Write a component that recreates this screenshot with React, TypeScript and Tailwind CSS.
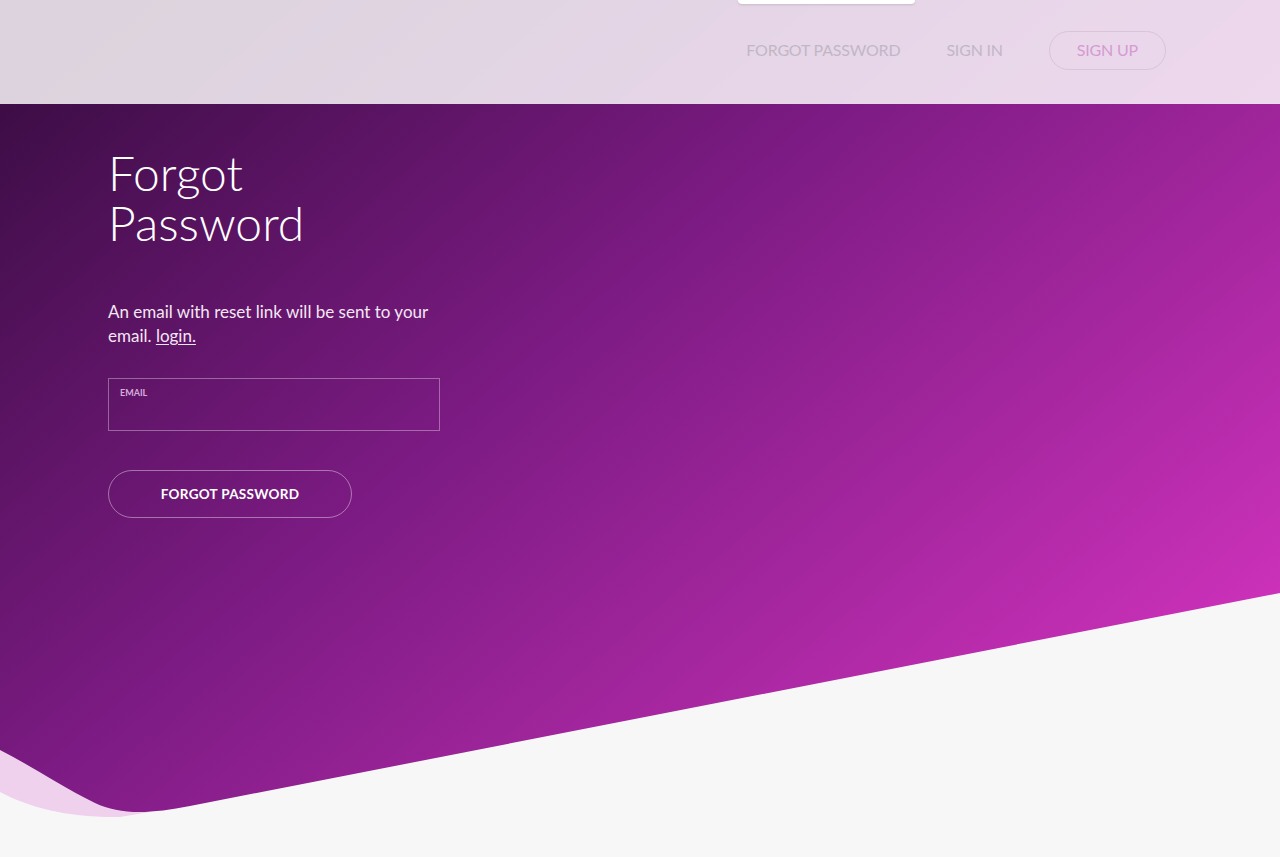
import React from 'react';

const Backdrop: React.FC = () => (
  <svg
    className="absolute inset-0 w-full h-full"
    viewBox="0 0 1280 857"
    preserveAspectRatio="none"
    aria-hidden="true"
  >
    <defs>
      <linearGradient id="hero" gradientUnits="userSpaceOnUse" x1="0" y1="105" x2="771" y2="1019">
        <stop offset="0" stopColor="#3d0d46" />
        <stop offset="0.45" stopColor="#7c1b83" />
        <stop offset="1" stopColor="#cb31b9" />
      </linearGradient>
    </defs>
    <path d="M0 700 L0 792 C30 808 70 818 120 817 L150 812 L150 700 Z" fill="#efd1ed" />
    <path
      d="M0 0 H1280 V593 L190 806 C150 814 120 815 95 803 C60 786 30 765 0 750 Z"
      fill="url(#hero)"
    />
  </svg>
);

const App: React.FC = () => {
  return (
    <div
      className="relative h-[857px] overflow-hidden bg-[#f7f7f7]"
      style={{ fontFamily: 'Lato, "Noto Sans", sans-serif' }}
    >
      <Backdrop />

      <header className="relative z-10 h-[104px] bg-white/[0.82] flex items-center justify-end pr-[114px] pb-[4px]">
        <div className="absolute top-0 left-[738px] w-[177px] h-[4px] bg-white rounded-b-sm shadow-sm" />
        <nav className="flex items-center gap-[46px] text-[16px] tracking-[-0.2px]">
          <a href="#" className="text-[#c2b6c6]">FORGOT PASSWORD</a>
          <a href="#" className="text-[#c2b6c6]">SIGN IN</a>
          <a
            href="#"
            className="h-[39px] px-[27px] flex items-center rounded-full border border-[#dcc3dc] text-[#d59bd1]"
          >
            SIGN UP
          </a>
        </nav>
      </header>

      <main className="relative z-10 pl-[108px] pt-[44px]">
        <h1 className="text-[48px] leading-[50px] font-light text-white">
          Forgot
          <br />
          Password
        </h1>

        <p className="mt-[52px] w-[340px] text-[17px] leading-[24px] text-[#f4e7f3]">
          An email with reset link will be sent to your email.{' '}
          <a href="#" className="underline underline-offset-2">login.</a>
        </p>

        <label className="mt-[30px] block w-[332px] h-[53px] border border-white/35 pl-[11px] pt-[8px]">
          <span className="block text-[9px] leading-[12px] font-bold text-[#d6acd9]">EMAIL</span>
          <input
            type="email"
            className="w-full bg-transparent outline-none text-white text-[14px]"
          />
        </label>

        <button className="mt-[39px] w-[244px] h-[48px] rounded-full border border-white/40 text-white text-[13.5px] font-bold tracking-[0.3px]">
          FORGOT PASSWORD
        </button>
      </main>
    </div>
  );
};

export default App;
